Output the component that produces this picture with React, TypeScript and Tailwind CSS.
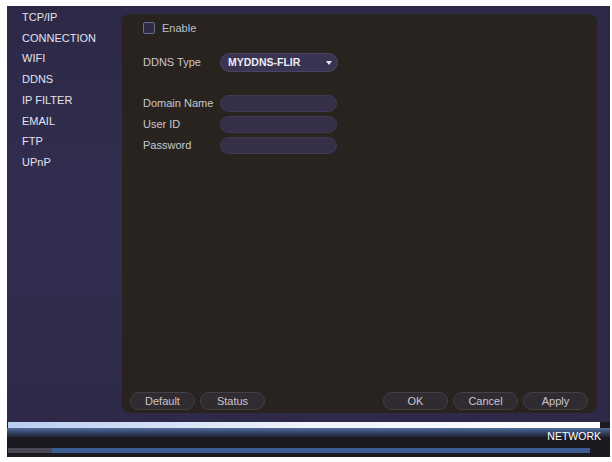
import { ReactNode } from "react";

const menu = ["TCP/IP", "CONNECTION", "WIFI", "DDNS", "IP FILTER", "EMAIL", "FTP", "UPnP"];

function Field({ label, children }: { label: string; children: ReactNode }) {
  return (
    <div className="flex items-center">
      <span className="w-[77px] text-[11px] leading-none text-[#c9c8cf]">{label}</span>
      {children}
    </div>
  );
}

function Input() {
  return <div className="w-[117px] h-[17px] rounded-full bg-[#352f47] border border-[#3f3953]" />;
}

function Btn({ label }: { label: string }) {
  return (
    <button className="w-[65px] h-[18px] rounded-full bg-[#302b30] border border-[#443f48] text-[11px] leading-none text-[#c9c8d2]">
      {label}
    </button>
  );
}

export default function App() {
  return (
    <div
      className="w-[612px] h-[462px] bg-white pl-[7px] pt-[6px] pr-[2px] pb-[5px]"
      style={{ fontFamily: '"Liberation Sans", Arial, sans-serif' }}
    >
      <div className="h-full flex flex-col bg-[#2e2948]">
        <div className="flex flex-1 min-h-0">
          {/* left menu */}
          <div className="w-[115px] pt-[1px] pl-[15px] bg-gradient-to-b from-[#2d2846] via-[#322e50] to-[#2e2948]">
            {menu.map((m) => (
              <div key={m} className="h-[20.7px] flex items-center text-[11px] text-[#e4e3ee]">
                {m}
              </div>
            ))}
          </div>

          {/* settings panel */}
          <div className="flex-1 pt-[8px] pr-[13px] pb-[9px]">
            <div className="h-full flex flex-col rounded-lg bg-[#28231f] pl-[21px] pt-[8px] pb-[3px]">
              <div className="flex items-center h-[12px]">
                <div className="w-[12px] h-[12px] rounded-[2px] border border-[#6a6c8e] bg-[#2c2a44]" />
                <span className="ml-[7px] text-[11px] leading-none text-[#bfbec6]">Enable</span>
              </div>

              <div className="mt-[19px]">
                <Field label="DDNS Type">
                  <div className="w-[118px] h-[19px] rounded-full bg-[#3a3452] border border-[#4a4463] flex items-center justify-between pl-[7px] pr-[5px]">
                    <span className="text-[10.5px] font-bold leading-none text-[#eeedf5]">MYDDNS-FLIR</span>
                    <svg width="6" height="4" viewBox="0 0 6 4">
                      <path d="M0 0 L6 0 L3 4 Z" fill="#e8e8f0" />
                    </svg>
                  </div>
                </Field>
              </div>

              <div className="mt-[23px] flex flex-col gap-[4px]">
                <Field label="Domain Name">
                  <Input />
                </Field>
                <Field label="User ID">
                  <Input />
                </Field>
                <Field label="Password">
                  <Input />
                </Field>
              </div>

              <div className="flex-1" />

              <div className="flex items-center -ml-[13px] pr-[9px]">
                <div className="flex gap-[5px]">
                  <Btn label="Default" />
                  <Btn label="Status" />
                </div>
                <div className="flex-1" />
                <div className="flex gap-[5px]">
                  <Btn label="OK" />
                  <Btn label="Cancel" />
                  <Btn label="Apply" />
                </div>
              </div>
            </div>
          </div>
        </div>

        {/* bottom status bar */}
        <div className="h-[35px] flex flex-col bg-[#1b1a20]">
          <div className="h-[6px] ml-[1px] mr-[10px] bg-gradient-to-r from-[#b9cdf0] via-[#eef3fb] to-[#ffffff]" />
          <div className="relative h-[9px] bg-gradient-to-b from-[#4f6c9e] to-[#1f2333]">
            <span className="absolute right-[9px] top-[3px] text-[10.5px] leading-none text-white">NETWORK</span>
          </div>
          <div className="h-[11px]" />
          <div className="flex h-[5px] pl-[1px] pr-[20px]">
            <div className="w-[44px] bg-[#4a4a57]" />
            <div className="flex-1 bg-[#3b5c92]" />
          </div>
          <div className="flex-1" />
        </div>
      </div>
    </div>
  );
}
